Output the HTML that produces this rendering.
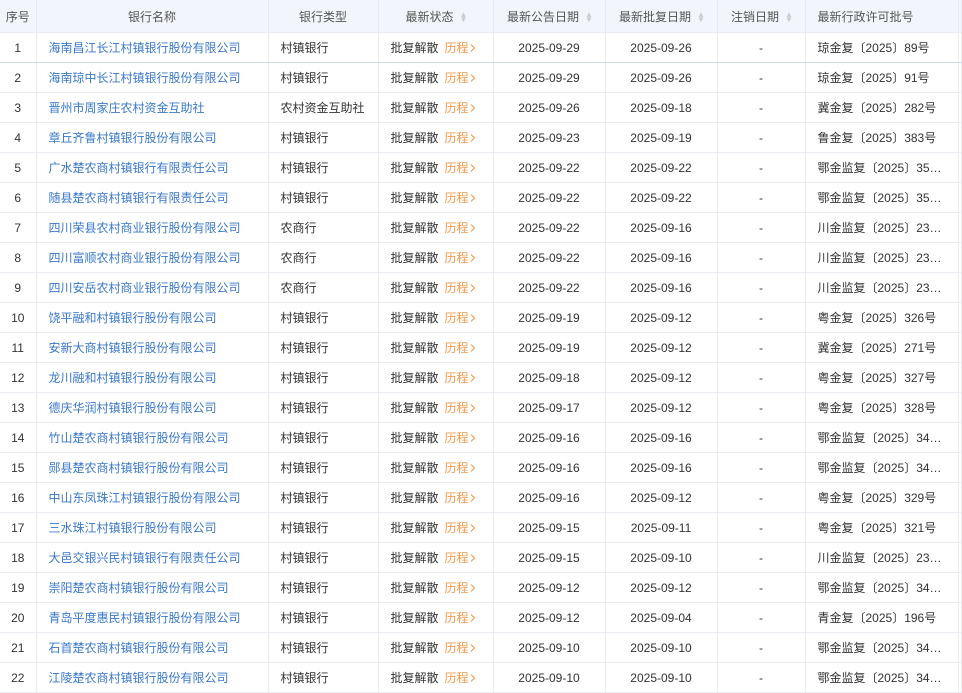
<!DOCTYPE html>
<html><head><meta charset="utf-8">
<style>
body{margin:0;background:#fff;font-family:"Liberation Sans","Noto Sans CJK SC",sans-serif;font-size:12px;color:#333;}
table{border-collapse:collapse;table-layout:fixed;width:962px;}
th{height:32px;background:#f2f6fc;font-weight:normal;color:#555;border-right:1px solid #e6ebf2;border-bottom:1px solid #e6ebf2;padding:0;white-space:nowrap;}
td{height:29px;border-right:1px solid #e8ecf2;border-bottom:1px solid #e8ecf2;padding:0;white-space:nowrap;overflow:hidden;text-overflow:ellipsis;}
tr.r1 td{border-bottom-color:#c9dbf3;}
.c{text-align:center}
.l{text-align:left;padding-left:12px}
a{color:#3a78c9;text-decoration:none}
.o{color:#f39a4a;margin-left:6px}
.o svg{vertical-align:-1px;margin-left:1px}
.s{display:inline-block;width:6px;vertical-align:middle;margin-left:6px;color:#c8ccd2;font-size:8px;line-height:5px}
</style></head><body>
<table>
<colgroup><col style="width:36px"><col style="width:232px"><col style="width:110px"><col style="width:115px"><col style="width:112px"><col style="width:112px"><col style="width:88px"><col style="width:153px"><col></colgroup>
<tr><th>序号</th><th>银行名称</th><th>银行类型</th><th>最新状态<span class="s">▲<br>▼</span></th><th>最新公告日期<span class="s">▲<br>▼</span></th><th>最新批复日期<span class="s">▲<br>▼</span></th><th>注销日期<span class="s">▲<br>▼</span></th><th class="l" style="text-align:left">最新行政许可批号</th><th></th></tr>
<tbody id="b">
</tbody></table>
<script>
var d=[["海南昌江长江村镇银行股份有限公司","村镇银行","2025-09-29","2025-09-26","琼金复〔2025〕89号"],
["海南琼中长江村镇银行股份有限公司","村镇银行","2025-09-29","2025-09-26","琼金复〔2025〕91号"],
["晋州市周家庄农村资金互助社","农村资金互助社","2025-09-26","2025-09-18","冀金复〔2025〕282号"],
["章丘齐鲁村镇银行股份有限公司","村镇银行","2025-09-23","2025-09-19","鲁金复〔2025〕383号"],
["广水楚农商村镇银行有限责任公司","村镇银行","2025-09-22","2025-09-22","鄂金监复〔2025〕35…"],
["随县楚农商村镇银行有限责任公司","村镇银行","2025-09-22","2025-09-22","鄂金监复〔2025〕35…"],
["四川荣县农村商业银行股份有限公司","农商行","2025-09-22","2025-09-16","川金监复〔2025〕23…"],
["四川富顺农村商业银行股份有限公司","农商行","2025-09-22","2025-09-16","川金监复〔2025〕23…"],
["四川安岳农村商业银行股份有限公司","农商行","2025-09-22","2025-09-16","川金监复〔2025〕23…"],
["饶平融和村镇银行股份有限公司","村镇银行","2025-09-19","2025-09-12","粤金复〔2025〕326号"],
["安新大商村镇银行股份有限公司","村镇银行","2025-09-19","2025-09-12","冀金复〔2025〕271号"],
["龙川融和村镇银行股份有限公司","村镇银行","2025-09-18","2025-09-12","粤金复〔2025〕327号"],
["德庆华润村镇银行股份有限公司","村镇银行","2025-09-17","2025-09-12","粤金复〔2025〕328号"],
["竹山楚农商村镇银行股份有限公司","村镇银行","2025-09-16","2025-09-16","鄂金监复〔2025〕34…"],
["郧县楚农商村镇银行股份有限公司","村镇银行","2025-09-16","2025-09-16","鄂金监复〔2025〕34…"],
["中山东凤珠江村镇银行股份有限公司","村镇银行","2025-09-16","2025-09-12","粤金复〔2025〕329号"],
["三水珠江村镇银行股份有限公司","村镇银行","2025-09-15","2025-09-11","粤金复〔2025〕321号"],
["大邑交银兴民村镇银行有限责任公司","村镇银行","2025-09-15","2025-09-10","川金监复〔2025〕23…"],
["崇阳楚农商村镇银行股份有限公司","村镇银行","2025-09-12","2025-09-12","鄂金监复〔2025〕34…"],
["青岛平度惠民村镇银行股份有限公司","村镇银行","2025-09-12","2025-09-04","青金复〔2025〕196号"],
["石首楚农商村镇银行股份有限公司","村镇银行","2025-09-10","2025-09-10","鄂金监复〔2025〕34…"],
["江陵楚农商村镇银行股份有限公司","村镇银行","2025-09-10","2025-09-10","鄂金监复〔2025〕34…"]];
var arr='<svg width="6" height="10" viewBox="0 0 6 10"><path d="M1 1.5L4.5 5L1 8.5" fill="none" stroke="#f39a4a" stroke-width="1.1"/></svg>';
var h="";d.forEach(function(r,i){h+='<tr'+(i==0?' class="r1"':'')+'><td class="c">'+(i+1)+'</td><td class="l"><a>'+r[0]+'</a></td><td class="l">'+r[1]+'</td><td class="l">批复解散<span class="o">历程'+arr+'</span></td><td class="c">'+r[2]+'</td><td class="c">'+r[3]+'</td><td class="c">-</td><td class="l">'+r[4]+'</td><td></td></tr>';});
document.getElementById("b").innerHTML=h;
</script>
</body></html>
